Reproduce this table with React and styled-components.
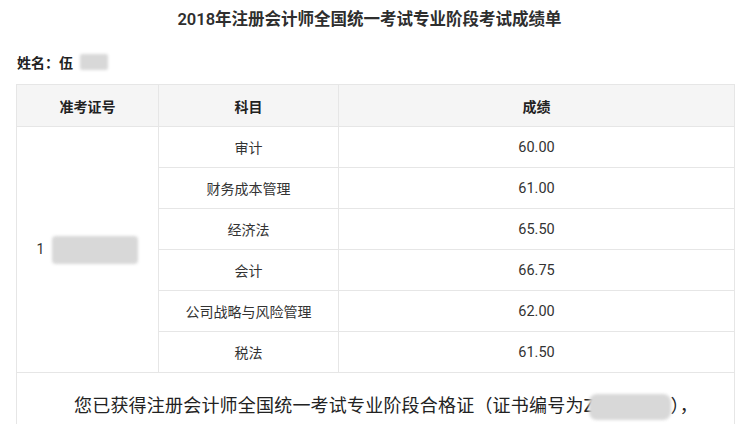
import React from "react";
import styled, { createGlobalStyle } from "styled-components";

const Global = createGlobalStyle`
  html, body { margin: 0; padding: 0; background: #fff; }
  body { font-family: "Roboto", "Noto Sans CJK SC", sans-serif; color: #333; }
`;

const Page = styled.div`
  width: 754px;
  height: 424px;
  overflow: hidden;
  padding: 0 21px 0 16px;
  box-sizing: border-box;
`;

const Title = styled.h1`
  margin: 0;
  padding-top: 9px;
  height: 40px;
  box-sizing: border-box;
  text-align: center;
  font-size: 16.5px;
  font-weight: 600;
  line-height: 22px;
  color: #2e2e2e;
  padding-right: 10px;
`;

const NameLine = styled.div`
  display: flex;
  align-items: center;
  height: 44px;
  padding-left: 1px;
  font-size: 14px;
  font-weight: 700;
  color: #222;
`;

const Redacted = styled.span`
  display: inline-block;
  vertical-align: middle;
  width: ${(p) => p.$w}px;
  height: ${(p) => p.$h}px;
  margin-left: ${(p) => p.$ml || 0}px;
  background: #d8d8d8;
  border-radius: ${(p) => p.$r || 2}px;
  filter: blur(1.5px);
`;

const Table = styled.table`
  width: 718px;
  border-collapse: collapse;
  table-layout: fixed;
  font-size: 14px;
  color: #333;
`;

const HeadCell = styled.th`
  height: 41px;
  padding: 0;
  background: #f5f5f5;
  border: 1px solid #e6e6e6;
  font-weight: 700;
  text-align: center;
  color: #222;
`;

const Cell = styled.td`
  height: 40px;
  padding: 0;
  border: 1px solid #e6e6e6;
  text-align: center;
  vertical-align: middle;
`;

const Score = styled(Cell)`
  font-family: "Roboto", sans-serif;
  font-size: 14.5px;
`;

const NoteCell = styled.td`
  height: 70px;
  border: 1px solid #e6e6e6;
  padding: 18px 0 0 57px;
  vertical-align: top;
  font-size: 18px;
  letter-spacing: 0.2px;
  color: #222;
  white-space: nowrap;
`;

const rows = [
  ["审计", "60.00"],
  ["财务成本管理", "61.00"],
  ["经济法", "65.50"],
  ["会计", "66.75"],
  ["公司战略与风险管理", "62.00"],
  ["税法", "61.50"],
];

export default function App() {
  return (
    <Page>
      <Global />
      <Title>2018年注册会计师全国统一考试专业阶段考试成绩单</Title>
      <NameLine>
        姓名：伍<Redacted $w={28} $h={16} $ml={7} />
      </NameLine>
      <Table>
        <colgroup>
          <col style={{ width: 142 }} />
          <col style={{ width: 180 }} />
          <col style={{ width: 396 }} />
        </colgroup>
        <thead>
          <tr>
            <HeadCell>准考证号</HeadCell>
            <HeadCell>科目</HeadCell>
            <HeadCell>成绩</HeadCell>
          </tr>
        </thead>
        <tbody>
          {rows.map(([subj, score], i) => (
            <tr key={subj}>
              {i === 0 && (
                <Cell rowSpan={rows.length}>
                  1<Redacted $w={86} $h={28} $ml={8} $r={4} />
                </Cell>
              )}
              <Cell>{subj}</Cell>
              <Score>{score}</Score>
            </tr>
          ))}
          <tr>
            <NoteCell colSpan={3}>
              您已获得注册会计师全国统一考试专业阶段合格证（证书编号为Z
              <Redacted $w={82} $h={26} $r={8} $ml={-6} />），
            </NoteCell>
          </tr>
        </tbody>
      </Table>
    </Page>
  );
}
